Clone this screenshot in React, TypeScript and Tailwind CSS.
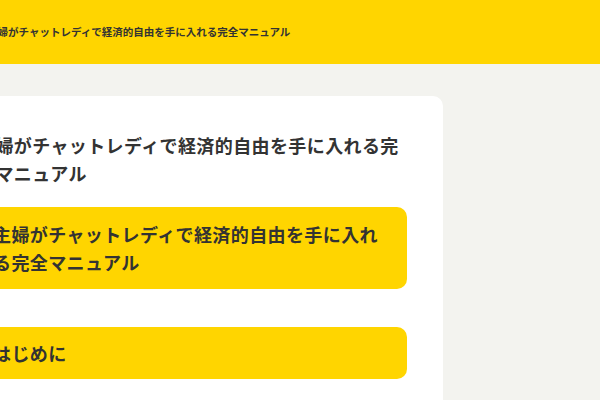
import React from "react";

const title = "主婦がチャットレディで経済的自由を手に入れる完全マニュアル";

export default function App() {
  return (
    <div
      className="w-[600px] h-[400px] overflow-hidden bg-[#f3f3ef] text-[#333333]"
      style={{ fontFamily: '"Noto Sans CJK JP", "Noto Sans", sans-serif' }}
    >
      <header className="h-[64px] bg-[#ffd500] flex items-center">
        <p className="ml-[-13px] text-[10.5px] leading-none font-bold whitespace-nowrap">{title}</p>
      </header>
      <main className="pt-[32px]">
        <article className="ml-[-49px] w-[492px] h-[360px] bg-white rounded-[10px] pl-[26px] pr-[32px] pt-[35px]">
          <h1 className="text-[18px] leading-[28px] tracking-[0.4px] font-bold">{title}</h1>
          <nav className="mt-[20px] flex flex-col gap-[38px]">
            <div className="mr-[4px] bg-[#ffd500] rounded-[10px] pl-[16px] pr-[20px] py-[13px] text-[18px] leading-[28px] tracking-[0.4px] font-bold">
              {title}
            </div>
            <div className="mr-[4px] bg-[#ffd500] rounded-[10px] pl-[16px] pr-[20px] py-[12px] text-[18px] leading-[28px] tracking-[0.4px] font-bold">
              はじめに
            </div>
          </nav>
        </article>
      </main>
    </div>
  );
}
